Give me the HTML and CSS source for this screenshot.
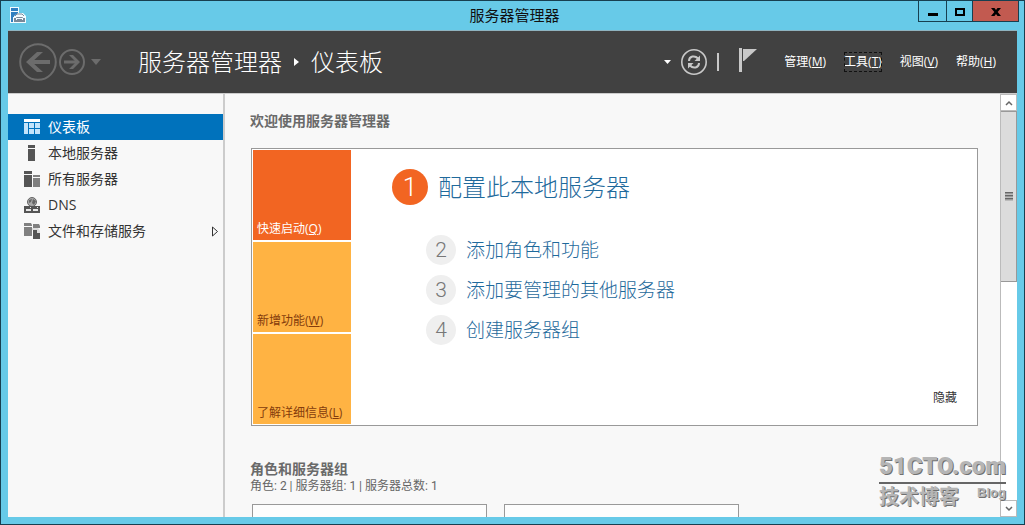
FILE: index.html
```html
<!DOCTYPE html>
<html lang="zh-CN">
<head>
<meta charset="utf-8">
<meta name="viewport" content="width=device-width, initial-scale=1">
<title>服务器管理器</title>
<link rel="stylesheet" href="styles.css">
</head>
<body>
<div class="window">
  <header class="titlebar">
    <svg class="app-icon" width="16" height="16" viewBox="0 0 16 16" aria-hidden="true">
      <path d="M0 0H9V6H13L16 9V16H0Z" fill="#f4fbff"/>
      <path d="M1 1H8V4H1ZM1 5H8V6L4 9V10H3V15H1Z" fill="#2f7fc0"/>
      <path d="M4 10H15V15H4Z" fill="#78899a"/>
      <path d="M5 9L7 7H12L14 9" fill="none" stroke="#78899a"/>
      <path d="M4 10.500H6L7 11.500H12L13 10.500H15M6.500 11V13M12.500 11V13" fill="none" stroke="#f4fbff"/>
    </svg>
    <h1 class="window-title">服务器管理器</h1>
    <div class="window-buttons">
      <button class="win-btn minimize" type="button" aria-label="最小化"><svg width="10" height="12" viewBox="0 0 10 12"><path d="M0 8H10V11H0Z"/></svg></button>
      <button class="win-btn maximize" type="button" aria-label="最大化"><svg width="10" height="12" viewBox="0 0 10 12"><path d="M1 4V10H9V4Z" fill="none" stroke="#000" stroke-width="2"/></svg></button>
      <button class="win-btn close" type="button" aria-label="关闭"><svg width="10" height="12" viewBox="0 0 10 12"><path d="M0 3H3.500L5 5L6.500 3H10L6.700 7L10 11H6.500L5 9L3.500 11H0L3.300 7Z"/></svg></button>
    </div>
  </header>

  <div class="frame">
    <div class="toolbar">
      <div class="history">
        <button class="icon-btn" type="button" aria-label="后退"><svg width="38" height="38" viewBox="0 0 38 38" fill="none" stroke="#6c6c6c"><circle cx="19" cy="19" r="17.800" stroke-width="2"/><path d="M10 19H31" stroke-width="4"/><path d="M24 9H18L7 19L18 29H24L13 19Z" fill="#6c6c6c" stroke="none"/></svg></button>
        <button class="icon-btn" type="button" aria-label="前进"><svg width="26" height="26" viewBox="0 0 26 26" fill="none" stroke="#6c6c6c"><circle cx="13" cy="13" r="12" stroke-width="2"/><path d="M5 13H19" stroke-width="3"/><path d="M10 6H14L21 13L14 20H10L17 13Z" fill="#6c6c6c" stroke="none"/></svg></button>
        <button class="icon-btn caret" type="button" aria-label="历史记录"><svg width="10" height="6" viewBox="0 0 10 6"><path d="M0 0H10L5 6Z" fill="#6c6c6c"/></svg></button>
      </div>
      <nav class="breadcrumb" aria-label="位置">
        <span>服务器管理器</span>
        <svg width="5" height="8" viewBox="0 0 5 8" aria-hidden="true"><path d="M0 0L5 4L0 8Z" fill="#fff"/></svg>
        <span>仪表板</span>
      </nav>
      <div class="actions">
        <button class="icon-btn" type="button" aria-label="更多"><svg width="7" height="4" viewBox="0 0 7 4"><path d="M0 0H7L3.500 4Z" fill="#fff"/></svg></button>
        <button class="icon-btn" type="button" aria-label="刷新"><svg width="26" height="26" viewBox="0 0 26 26" fill="none" stroke="#c8c8c8"><circle cx="13" cy="13" r="12.200" stroke-width="1.600"/><path d="M8 12C8 7 14 6 17 9.500M18 14C18 19 12 20 9 16.500" stroke-width="2"/><path d="M19 6.500V12H13.500ZM7 19.500V14H12.500Z" fill="#c8c8c8" stroke="none"/></svg></button>
        <span class="separator"></span>
        <button class="icon-btn flag" type="button" aria-label="通知"><svg width="18" height="24" viewBox="0 0 18 24"><path d="M0 0H3V24H0Z" fill="#c8c8c8"/><path d="M4 1H18L5 13H4Z" fill="#c8c8c8"/></svg></button>
      </div>
      <nav class="menu" aria-label="菜单">
        <button type="button">管理(<u>M</u>)</button>
        <button type="button" class="focused">工具(<u>T</u>)</button>
        <button type="button">视图(<u>V</u>)</button>
        <button type="button">帮助(<u>H</u>)</button>
      </nav>
    </div>

    <div class="body">
      <nav class="sidebar" aria-label="导航">
        <a class="nav-item active" href="#dashboard"><svg width="16" height="16" viewBox="0 0 16 16"><path d="M0 0H16V3H0Z" fill="#fff"/><path d="M0 4H4V15H0ZM5 4H10V9H5ZM11 4H16V9H11ZM5 10H10V15H5ZM11 10H16V15H11Z" fill="#c3e4fb"/></svg><span>仪表板</span></a>
        <a class="nav-item" href="#local"><svg width="16" height="16" viewBox="0 0 16 16" fill="#555"><path d="M4 0H11V3H4ZM4 4H11V16H4Z"/></svg><span>本地服务器</span></a>
        <a class="nav-item" href="#all"><svg width="16" height="16" viewBox="0 0 16 16"><path d="M0 0H8V3H0ZM0 4H8V16H0Z" fill="#555"/><path d="M9 4H16V6H9ZM9 7H16V16H9Z" fill="#808080"/></svg><span>所有服务器</span></a>
        <a class="nav-item" href="#dns"><svg width="16" height="16" viewBox="0 0 16 16"><circle cx="8" cy="5" r="4.500" fill="#aaa" stroke="#666"/><path d="M5 3L8 2L7 5L5 6ZM9 2L12 4L10 8L8 6Z" fill="#666"/><path d="M0 9H16V16H0Z" fill="#555"/><path d="M2 12H7V14H2ZM9 12H14V14H9ZM6 10H7V11H6ZM13 10H14V11H13Z" fill="#e8e8e8"/></svg><span>DNS</span></a>
        <a class="nav-item" href="#storage"><svg width="16" height="16" viewBox="0 0 16 16"><path d="M0 0H7L8 2V3H0ZM0 4H8V13H0ZM9 1H15L16 3V5H9Z" fill="#808080"/><path d="M9 6H13L16 9V16H9Z" fill="#555"/><path d="M8 5H14L16 8V10H13V7H8Z" fill="#ddd"/></svg><span>文件和存储服务</span><svg class="expand" width="8" height="11" viewBox="0 0 8 11" fill="none" stroke="#333"><path d="M1.500 1L6.500 5.500L1.500 10Z"/></svg></a>
      </nav>

      <main class="content">
        <h2 class="heading">欢迎使用服务器管理器</h2>
        <section class="welcome">
          <div class="tabs">
            <button class="tab selected" type="button">快速启动(<u>Q</u>)</button>
            <button class="tab" type="button">新增功能(<u>W</u>)</button>
            <button class="tab" type="button">了解详细信息(<u>L</u>)</button>
          </div>
          <div class="steps">
            <a class="step primary" href="#configure"><span class="num">1</span><span>配置此本地服务器</span></a>
            <a class="step" href="#roles"><span class="num">2</span><span>添加角色和功能</span></a>
            <a class="step" href="#servers"><span class="num">3</span><span>添加要管理的其他服务器</span></a>
            <a class="step" href="#group"><span class="num">4</span><span>创建服务器组</span></a>
          </div>
          <button class="hide" type="button">隐藏</button>
        </section>
        <h2 class="heading groups">角色和服务器组</h2>
        <p class="summary">角色: 2 | 服务器组: 1 | 服务器总数: 1</p>
        <div class="tiles"><div class="tile"></div><div class="tile"></div></div>
      </main>

      <div class="scrollbar">
        <button class="scroll-btn" type="button" aria-label="向上滚动"><svg width="8" height="6" viewBox="0 0 8 6"><path d="M1 5L4 2L7 5" fill="none" stroke="#666" stroke-width="1.500"/></svg></button>
        <div class="track"><div class="thumb"><span class="grip"></span></div></div>
        <button class="scroll-btn" type="button" aria-label="向下滚动"><svg width="8" height="6" viewBox="0 0 8 6"><path d="M1 1L4 4L7 1" fill="none" stroke="#666" stroke-width="1.500"/></svg></button>
      </div>
    </div>
  </div>
  <div class="watermark">
    <div class="mark-name">51CTO.com</div>
    <div class="mark-sub"><span class="mark-cn">技术博客</span><span class="mark-blog">Blog</span></div>
  </div>
</div>
</body>
</html>
```
FILE: styles.css
```css
* { box-sizing: border-box; }

body {
  margin: 0;
  font-family: "Open Sans", "Noto Sans CJK SC", sans-serif;
  font-size: 14px;
  color: #333;
}

button {
  margin: 0;
  padding: 0;
  border: 0;
  background: none;
  font: inherit;
  color: inherit;
}

svg { display: block; flex: none; }
a { color: inherit; text-decoration: none; }
u { text-underline-offset: 1px; }

.window {
  position: relative;
  display: flex;
  flex-direction: column;
  height: 100vh;
  border: 1px solid #173f50;
  background: #67cae8;
  overflow: hidden;
}

/* Title bar */
.titlebar {
  flex: none;
  display: grid;
  grid-template-columns: 1fr auto 1fr;
  height: 29px;
  padding: 0 5px 0 9px;
}
.app-icon { margin-top: 6px; }
.window-title {
  margin: 0;
  font-size: 15px;
  font-weight: 400;
  line-height: 29px;
  color: #111;
}
.window-buttons { display: flex; justify-self: end; height: 21px; }
.win-btn {
  display: flex;
  align-items: center;
  justify-content: center;
  width: 28px;
  border: 1px solid #173f50;
  border-top: 0;
  border-right: 0;
}
.maximize { width: 26px; }
.close { width: 47px; border-right: 1px solid #173f50; background: #c25a50; }

/* Client area */
.frame {
  flex: 1;
  display: flex;
  flex-direction: column;
  min-height: 0;
  margin: 0 7px 7px;
  border-top: 1px solid #8fb3bf;
  background: #f8f8f8;
}

.toolbar {
  flex: none;
  display: flex;
  align-items: center;
  height: 62px;
  padding: 0 21px 0 11px;
  background: #414141;
  color: #fff;
}
.history { display: flex; align-items: center; gap: 2px; }
.caret { margin-left: 4px; }
.breadcrumb {
  display: flex;
  align-items: center;
  gap: 12px;
  margin-left: 37px;
  font-size: 24px;
  font-weight: 300;
  line-height: 32px;
}
.actions { display: flex; align-items: center; gap: 10px; margin-left: auto; }
.separator { width: 2px; height: 18px; background: #c8c8c8; }
.flag { margin: 0 0 4px 10px; }
.menu {
  display: flex;
  gap: 18px;
  margin-left: 27px;
  font-size: 12px;
  line-height: 20px;
}
.menu button { white-space: nowrap; }
.menu .focused { outline: 1px dashed #111; outline-offset: -1px; }

.body { flex: 1; display: flex; min-height: 0; border-top: 1px solid #ccc; }

/* Navigation */
.sidebar {
  flex: none;
  width: 217px;
  padding-top: 20px;
  border-right: 2px solid #ccc;
}
.nav-item {
  display: flex;
  align-items: center;
  gap: 8px;
  height: 26px;
  padding: 0 4px 0 16px;
  line-height: 26px;
}
.nav-item.active { background: #0072bc; color: #fff; }
.expand { margin-left: auto; }

/* Dashboard */
.content { flex: 1; min-width: 0; padding: 17px 22px 0 25px; overflow: hidden; }
.heading {
  margin: 0;
  font-size: 14px;
  font-weight: 700;
  line-height: 20px;
  color: #6a6a6a;
}
.welcome {
  display: flex;
  margin: 17px 0 0 1px;
  padding: 1px;
  border: 1px solid #999;
  background: #fff;
}
.tabs { display: flex; flex-direction: column; gap: 2px; width: 98px; }
.tab {
  display: block;
  height: 90px;
  padding: 68px 4px 0;
  background: #ffb343;
  color: #843c0c;
  font-size: 12px;
  line-height: 20px;
  text-align: left;
  white-space: nowrap;
}
.tab.selected { background: #f26522; color: #fff; }
.steps {
  flex: 1;
  display: flex;
  flex-direction: column;
  align-items: flex-start;
  gap: 10px;
  padding: 19px 0 0 41px;
}
.step {
  display: flex;
  align-items: center;
  gap: 10px;
  margin-left: 34px;
  color: #1f6a9c;
  font-size: 19px;
  font-weight: 300;
  line-height: 30px;
}
.num {
  width: 30px;
  height: 30px;
  border-radius: 50%;
  background: #efefef;
  color: #777;
  font-family: Roboto, sans-serif;
  font-size: 21px;
  text-align: center;
}
.step.primary { margin: 0 0 20px; font-size: 24px; line-height: 36px; }
.primary .num { width: 36px; height: 36px; background: #f26522; color: #fff; font-size: 26px; }
.hide {
  align-self: flex-end;
  margin: 0 19px 16px 0;
  font-size: 12px;
  line-height: 20px;
}
.groups { margin-top: 33px; }
.summary {
  margin: 0;
  font-family: Roboto, "Noto Sans CJK SC", sans-serif;
  font-size: 12px;
  line-height: 14px;
  color: #666;
}
.tiles {
  display: grid;
  grid-template-columns: repeat(auto-fill, 235px);
  gap: 17px;
  margin: 11px 0 0 2px;
}
.tile { height: 200px; border: 1px solid #999; background: #fdfdfd; }

/* Scroll bar */
.scrollbar {
  flex: none;
  display: flex;
  flex-direction: column;
  width: 17px;
  border-left: 1px solid #bbb;
  background: #fff;
}
.scroll-btn {
  display: flex;
  align-items: center;
  justify-content: center;
  height: 17px;
  border: 1px solid #bbb;
  border-left: 0;
}
.track { flex: 1; }
.thumb {
  display: flex;
  align-items: center;
  justify-content: center;
  height: 44%;
  border: 1px solid #999;
  border-left: 0;
  background: #dcdcdc;
}
.grip {
  width: 8px;
  height: 9px;
  background: repeating-linear-gradient(#666 0 1px, #999 1px 2px, #bbb 2px 3px);
}

/* Corner mark laid over the content */
.watermark {
  position: absolute;
  right: 18px;
  bottom: 14px;
  color: #b5b5b5;
  text-shadow: 1px 1px 0 #707070;
}
.mark-name {
  border-bottom: 2px solid #666;
  font: 900 24px/32px Roboto, sans-serif;
}
.mark-sub { display: flex; justify-content: space-between; }
.mark-cn { font-size: 20px; font-weight: 700; line-height: 26px; }
.mark-blog { font: 700 13px/18px "Liberation Sans", sans-serif; }
```
